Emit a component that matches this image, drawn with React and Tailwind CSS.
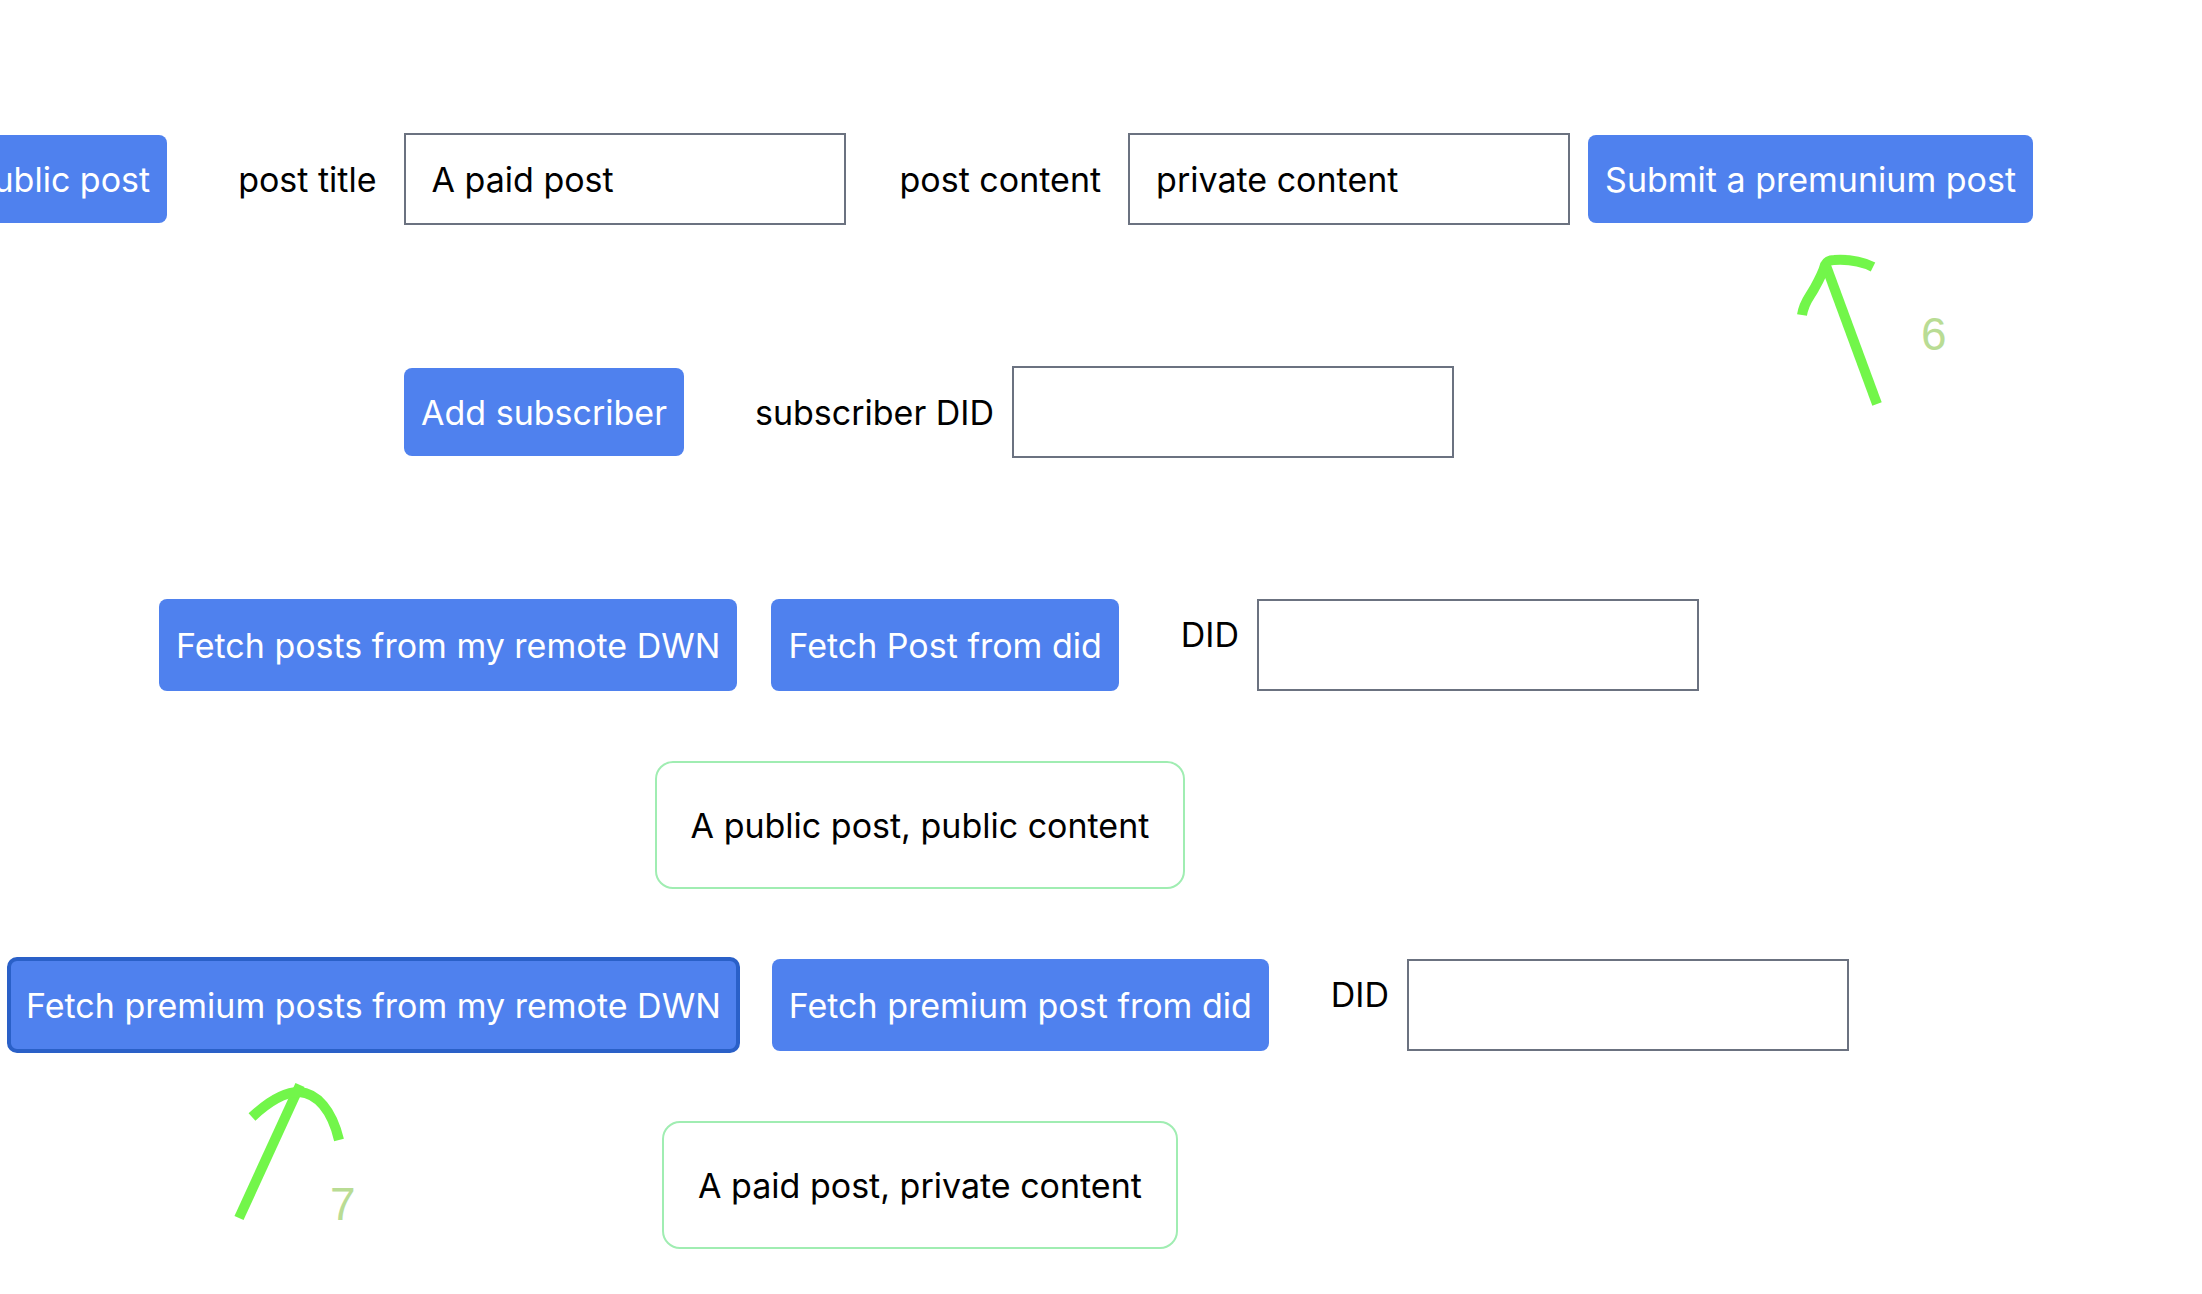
const FONT = 'font-["Inter","Liberation_Sans",sans-serif]';

function Button({ children, className = '' }) {
  return (
    <button
      type="button"
      className={`shrink-0 rounded-lg bg-[#4f81ee] px-[17px] text-white ${className}`}
    >
      {children}
    </button>
  );
}

function TextBox({ id, value = '' }) {
  return (
    <input
      id={id}
      type="text"
      defaultValue={value}
      className="h-[92px] w-[442px] shrink-0 border-2 border-[#6b7280] bg-white px-[26px] text-black outline-none"
    />
  );
}

function PostCard({ children }) {
  return (
    <div className="mr-[18px] flex h-32 items-center rounded-[18px] border-2 border-[#a0edb2] px-[34px]">
      <p>{children}</p>
    </div>
  );
}

function FetchRow({ id, mine, other, focused = false, note }) {
  return (
    <div className="flex h-[92px] w-full items-stretch justify-center">
      <div className="relative flex">
        <Button
          className={focused ? 'outline-4 -outline-offset-2 outline-[#2a60c8]' : ''}
        >
          {mine}
        </Button>
        {note}
      </div>
      <Button className="ml-[34px]">{other}</Button>
      <label htmlFor={id} className="ml-[62px] mr-[18px] leading-[72px]">
        DID
      </label>
      <TextBox id={id} />
    </div>
  );
}

function Step({ children, className }) {
  return (
    <span
      className={`pointer-events-none absolute font-["Liberation_Sans",sans-serif] text-[46px] leading-[46px] text-[#b9dc94] ${className}`}
    >
      {children}
    </span>
  );
}

export default function App() {
  return (
    <main
      className={`flex min-h-screen flex-col items-center overflow-hidden whitespace-nowrap bg-white pt-[133px] pb-11 text-[34px] leading-[55px] text-black ${FONT}`}
    >
      <section className="flex w-full items-center justify-end pr-[169px]">
        <Button className="h-[88px]">Submit a public post</Button>
        <label htmlFor="title" className="ml-[71px] mr-[27px]">
          post title
        </label>
        <TextBox id="title" value="A paid post" />
        <label htmlFor="content" className="ml-[54px] mr-[27px]">
          post content
        </label>
        <TextBox id="content" value="private content" />
        <div className="relative ml-[18px] flex">
          <Button className="h-[88px]">Submit a premunium post</Button>
          <svg
            aria-hidden="true"
            viewBox="1795 250 90 162"
            className="pointer-events-none absolute left-[207px] top-[115px] h-[162px] w-[90px] fill-none stroke-[#72f64a] stroke-[10]"
          >
            <path d="M1877 404 1825 263" />
            <path d="M1802 315C1804 302 1809 298 1814 289C1819 280 1823 273 1825 265C1827 261 1829 260 1834 260C1850 259 1861 261 1873 267" />
          </svg>
          <Step className="left-[333px] top-[176px]">6</Step>
        </div>
      </section>

      <section className="mt-[141px] flex w-full items-center justify-center pr-[344px]">
        <Button className="h-[88px]">Add subscriber</Button>
        <label htmlFor="subscriber" className="ml-[71px] mr-[18px]">
          subscriber DID
        </label>
        <TextBox id="subscriber" />
      </section>

      <section className="mt-[141px] flex w-full flex-col items-center gap-[70px] pr-[344px]">
        <FetchRow
          id="did"
          mine="Fetch posts from my remote DWN"
          other="Fetch Post from did"
        />
        <PostCard>A public post, public content</PostCard>
        <FetchRow
          id="premium-did"
          mine="Fetch premium posts from my remote DWN"
          other="Fetch premium post from did"
          focused
          note={
            <>
              <svg
                aria-hidden="true"
                viewBox="230 1080 120 145"
                className="pointer-events-none absolute left-[221px] top-[121px] h-[145px] w-[120px] fill-none stroke-[#72f64a] stroke-[10]"
              >
                <path d="M239 1218 300 1085" />
                <path d="M252 1117C269 1101 285 1092 299 1092C317 1093 332 1110 339 1140" />
              </svg>
              <Step className="left-[321px] top-[222px]">7</Step>
            </>
          }
        />
        <PostCard>A paid post, private content</PostCard>
      </section>
    </main>
  );
}
